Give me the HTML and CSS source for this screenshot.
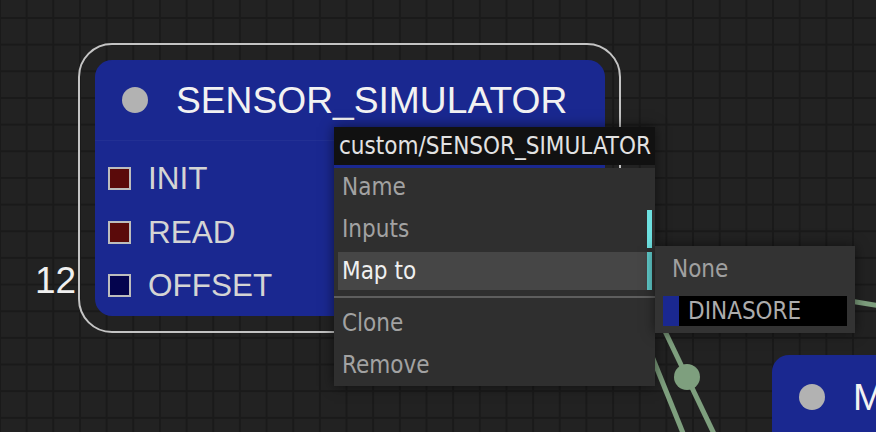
FILE: index.html
```html
<!DOCTYPE html>
<html lang="en">

<head>
    <meta charset="UTF-8">
    <meta name="viewport" content="width=device-width, initial-scale=1.0">
    <title>Graph Editor</title>
    <link rel="stylesheet" href="styles.css">
</head>

<body>
    <div class="graph">
        <!-- links between nodes -->
        <svg class="links" width="876" height="432" viewBox="0 0 876 432">
            <path d="M652 304 L716 438" />
            <path d="M643 334 L685 438" />
            <path d="M850 301 L880 306" />
            <circle cx="687" cy="377" r="13" />
        </svg>

        <div class="node-count">12</div>

        <div class="node node-sensor selected">
            <div class="node-title">
                <span class="node-dot"></span>
                <span>SENSOR_SIMULATOR</span>
            </div>
            <div class="node-body">
                <div class="slot"><span class="slot-box event"></span>INIT</div>
                <div class="slot"><span class="slot-box event"></span>READ</div>
                <div class="slot"><span class="slot-box data"></span>OFFSET</div>
            </div>
        </div>

        <div class="node node-next">
            <div class="node-title">
                <span class="node-dot"></span>
                <span>M</span>
            </div>
        </div>

        <div class="context-menu">
            <div class="menu-title">custom/SENSOR_SIMULATOR</div>
            <div class="menu-body">
                <div class="menu-entry">Name</div>
                <div class="menu-entry has-submenu">Inputs</div>
                <div class="menu-entry has-submenu active">Map to</div>
                <div class="menu-separator"></div>
                <div class="menu-entry">Clone</div>
                <div class="menu-entry">Remove</div>
            </div>
        </div>

        <div class="submenu">
            <div class="submenu-entry">None</div>
            <div class="submenu-entry device">
                <span class="device-color"></span>DINASORE
            </div>
        </div>
    </div>
</body>

</html>
```

FILE: styles.css
```css
:root {
    --canvas: #222222;
    --grid: #1a1a1a;
    --node: #1a2890;
    --link: #7e9f7e;
    --menu: #2f2f2f;
    --accent: #6de0e0;
}

body {
    margin: 0;
    overflow: hidden;
    background: var(--canvas);
}

.graph {
    position: relative;
    width: 876px;
    height: 432px;
    overflow: hidden;
    background-color: var(--canvas);
    background-image:
        linear-gradient(to right, var(--grid) 2px, transparent 2px),
        linear-gradient(to bottom, var(--grid) 2px, transparent 2px);
    background-size: 26.67px 26.67px;
    background-position: -1px 17px;
    font-family: 'Liberation Sans', Arial, sans-serif;
}

.links {
    position: absolute;
    left: 0;
    top: 0;
}

.links path {
    stroke: var(--link);
    stroke-width: 5;
    fill: none;
}

.links circle {
    fill: var(--link);
}

.node-count {
    position: absolute;
    left: 35px;
    top: 261px;
    color: #f0f0f0;
    font-size: 37px;
    line-height: 40px;
}

/* graph nodes */
.node {
    position: absolute;
    background: var(--node);
    border-radius: 17px;
    color: #f2f2f2;
}

.node-sensor {
    left: 95px;
    top: 60px;
    width: 510px;
    height: 256px;
}

.node-next {
    left: 772px;
    top: 355px;
    width: 104px;
    height: 160px;
    border-radius: 17px 0 0 0;
    overflow: hidden;
}

.selected::before {
    content: '';
    position: absolute;
    inset: -17px -16px -17px -17px;
    border: 2.5px solid #c4c4c4;
    border-radius: 34px;
}

.node-title {
    display: flex;
    align-items: center;
    gap: 28px;
    height: 80px;
    padding-left: 27px;
    font-size: 37.2px;
    white-space: nowrap;
    border-bottom: 1px solid rgba(255, 255, 255, 0.04);
}

.node-next .node-title {
    height: 84px;
}

.node-dot {
    width: 26px;
    height: 26px;
    border-radius: 50%;
    background: #b2b2b2;
    flex-shrink: 0;
}

.node-body {
    padding: 11px 0 0 13px;
}

.slot {
    display: flex;
    align-items: center;
    gap: 17px;
    height: 53.5px;
    font-size: 31.5px;
    color: #d4d4d4;
}

.slot-box {
    width: 19px;
    height: 19px;
    border: 2px solid #bdbdbd;
}

.slot-box.event {
    background: #5a0a0a;
}

.slot-box.data {
    background: #04044e;
}

/* context menu */
.context-menu,
.submenu {
    position: absolute;
    font-family: 'DejaVu Sans Condensed', 'DejaVu Sans', Tahoma, sans-serif;
    font-stretch: condensed;
    font-size: 24px;
    box-shadow: 0 0 12px rgba(0, 0, 0, 0.55);
}

.context-menu {
    left: 334px;
    top: 127px;
    width: 321px;
}

.menu-title {
    height: 38px;
    line-height: 38px;
    padding-left: 5px;
    background: #111111;
    color: #e2e2e2;
    white-space: nowrap;
}

.menu-body {
    background: var(--menu);
    padding-bottom: 2px;
}

.menu-entry {
    display: flex;
    align-items: center;
    height: 38px;
    margin: 4px 3px 0 4px;
    padding-left: 4px;
    color: #a2a2a2;
    border-right: 5px solid transparent;
}

.menu-entry:first-child {
    margin-top: 3px;
}

.menu-entry.has-submenu {
    border-right-color: var(--accent);
}

.menu-entry.active {
    background: #464646;
    color: #f0f0f0;
    border-right-color: #5fcaca;
}

.menu-separator {
    height: 2px;
    margin: 6px 0 6px;
    background: #5e5e5e;
}

.submenu {
    left: 655px;
    top: 246px;
    width: 184px;
    padding: 8px 8px 7px;
    background: #333333;
}

.submenu-entry {
    display: flex;
    align-items: center;
    height: 30px;
    padding-left: 9px;
    color: #a0a0a0;
}

.submenu-entry.device {
    margin-top: 12px;
    padding-left: 0;
    gap: 9px;
    background: #000000;
    color: #acacac;
}

.device-color {
    width: 16px;
    height: 100%;
    background: var(--node);
}
```
